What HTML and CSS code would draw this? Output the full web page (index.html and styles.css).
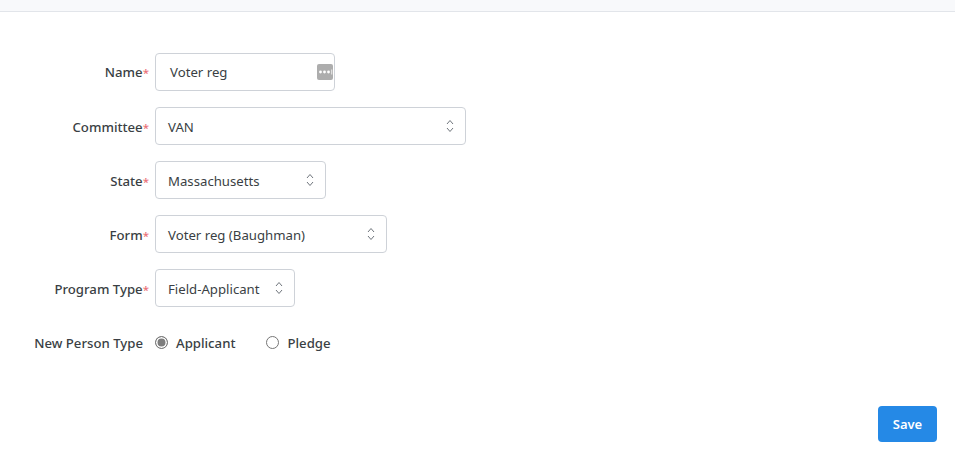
FILE: index.html
```html
<!DOCTYPE html>
<html lang="en">
<head>
  <meta charset="UTF-8">
  <title>Edit Program</title>
  <link rel="stylesheet" href="styles.css">
</head>
<body>
  <div class="topbar"></div>

  <form class="program-form">
    <div class="row row-name">
      <label class="label">Name<span class="req">*</span></label>
      <div class="field w-name">
        <span class="name-value">Voter reg</span>
        <svg class="dots" width="16" height="16" viewBox="0 0 16 16">
          <rect width="16" height="16" rx="2" fill="#adadad"/>
          <circle cx="3.5" cy="8" r="1.4" fill="#fff"/>
          <circle cx="7.5" cy="8" r="1.4" fill="#fff"/>
          <circle cx="11.5" cy="8" r="1.4" fill="#fff"/>
          <rect x="14.4" y="5.5" width="0.8" height="5" fill="#fff"/>
        </svg>
      </div>
    </div>

    <div class="row">
      <label class="label">Committee<span class="req">*</span></label>
      <div class="field w-committee">
        <span>VAN</span>
        <svg class="updown" width="8" height="14" viewBox="0 0 8 14"><path d="M1 5l3-3.500 3 3.500M1 9l3 3.500 3-3.500"/></svg>
      </div>
    </div>

    <div class="row">
      <label class="label">State<span class="req">*</span></label>
      <div class="field w-state">
        <span>Massachusetts</span>
        <svg class="updown" width="8" height="14" viewBox="0 0 8 14"><path d="M1 5l3-3.500 3 3.500M1 9l3 3.500 3-3.500"/></svg>
      </div>
    </div>

    <div class="row">
      <label class="label">Form<span class="req">*</span></label>
      <div class="field w-form">
        <span>Voter reg (Baughman)</span>
        <svg class="updown" width="8" height="14" viewBox="0 0 8 14"><path d="M1 5l3-3.500 3 3.500M1 9l3 3.500 3-3.500"/></svg>
      </div>
    </div>

    <div class="row">
      <label class="label">Program Type<span class="req">*</span></label>
      <div class="field w-type">
        <span>Field-Applicant</span>
        <svg class="updown" width="8" height="14" viewBox="0 0 8 14"><path d="M1 5l3-3.500 3 3.500M1 9l3 3.500 3-3.500"/></svg>
      </div>
    </div>

    <div class="row row-radio">
      <label class="label label-plain">New Person Type</label>
      <div class="radios">
        <span class="radio-item"><span class="radio checked"></span><span class="radio-text">Applicant</span></span>
        <span class="radio-item"><span class="radio"></span><span class="radio-text">Pledge</span></span>
      </div>
    </div>
  </form>

  <div class="actions">
    <button type="button" class="save">Save</button>
  </div>
</body>
</html>
```

FILE: styles.css
```css
* { box-sizing: border-box; }
body { margin: 0; font-family: "Noto Sans", "Open Sans", sans-serif; font-size: 13.2px; color: #3a3f44; background: #fff; }

.topbar { height: 12px; background: #f8f9fb; border-bottom: 1px solid #e2e5ea; }

.program-form { padding-top: 41px; display: flex; flex-direction: column; gap: 16px; }
.row { display: flex; align-items: center; height: 38px; }

.label { width: 149px; padding-top: 1px; text-align: right; font-weight: 500; margin-right: 6px; white-space: nowrap; }
.label-plain { width: 143px; margin-right: 12px; }
.req { color: #ea7077; font-size: 11.5px; }

.field { height: 38px; border: 1px solid #ced2d8; border-radius: 4px; display: flex; align-items: center; justify-content: space-between; padding: 0 11px 0 12px; background: #fff; }
.field span { padding-top: 1px; }
.row-name .label { padding-top: 0; }
.row-name .field span { padding-top: 0; }
.w-name { width: 180px; padding: 0 0 0 14px; }
.w-committee { width: 311px; }
.w-state { width: 171px; }
.w-form { width: 232px; }
.w-type { width: 140px; }

.dots { margin-right: 1px; }
.updown { fill: none; stroke: #6f757c; stroke-width: 1; }

.radios { display: flex; gap: 31px; font-weight: 500; }
.radio-item { display: flex; align-items: center; gap: 8px; }
.radio-text { padding-top: 1px; }
.radio { width: 13px; height: 13px; border: 1px solid #767676; border-radius: 50%; background: #fff; display: inline-block; }
.radio.checked { background: #7d7d7d; box-shadow: inset 0 0 0 1.5px #fff; }

.actions { display: flex; justify-content: flex-end; padding: 45px 18px 0 0; }
.save { width: 59px; height: 36px; border: none; border-radius: 4px; background: #2589e6; color: #fff; font: 600 13px "Noto Sans", "Open Sans", sans-serif; }
```
